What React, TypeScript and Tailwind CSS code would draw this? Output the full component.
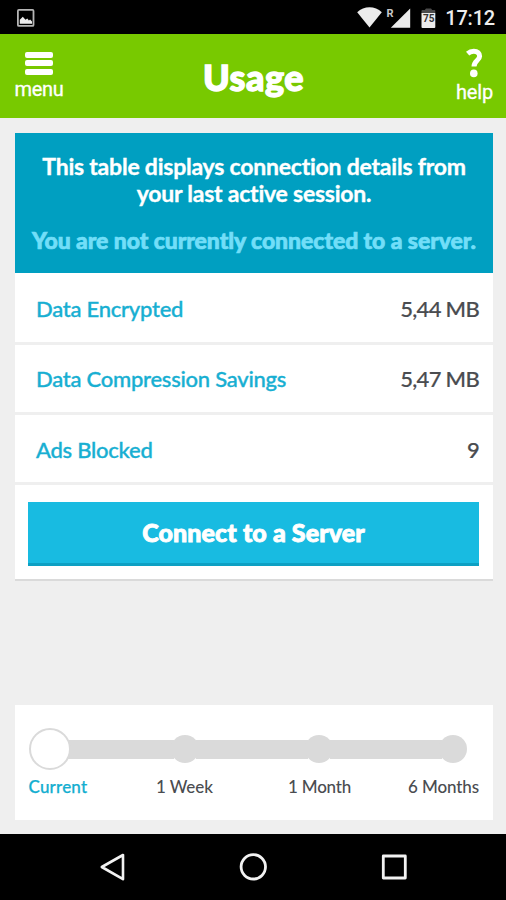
const rows = [
  { label: 'Data Encrypted', value: '5,44 MB', size: 'h-[72px] pt-[2px]' },
  { label: 'Data Compression Savings', value: '5,47 MB', size: 'h-[70px]' },
  { label: 'Ads Blocked', value: '9', size: 'h-[70px] pt-[1px]' },
];

function StatusBar() {
  return (
    <div className="flex h-[34px] items-center justify-between bg-black pl-[17px] pr-[11px]">
      <svg width="18" height="18" viewBox="0 0 18 18" className="mt-px">
        <rect x="0.9" y="0.9" width="15.6" height="16" rx="1" fill="none" stroke="#b5b5b5" strokeWidth="1.8" />
        <path d="M2.8 14.8V10.8l3-3 2.7 3 1.8-1.4 1.6 2 1.2-.8 1.9 1.8v2.4z" fill="#eee" />
      </svg>
      <div className="flex items-center">
        <svg width="80" height="24" viewBox="0 0 80 24" className="mr-[8px]">
          <path d="M0.2 7.2C7 0.6 18 0.6 24.8 7.2L12.5 22.6z" fill="#ececec" />
          <path d="M53.2 3.4V22.8H33.8z" fill="#ececec" />
          <text x="29.6" y="11.6" fontFamily="Roboto" fontSize="11" fontWeight="700" fill="#c8c8c8">R</text>
          <path d="M64.5 8.5V5.7q0-.8 1-.8h2.3L69 3.5h5l1.2 1.4h2.1q1 0 1 .8v2.8z" fill="#4a4a4a" />
          <path d="M64.5 8h13.8v14q0 1-1 1H65.5q-1 0-1-1z" fill="#ececec" />
          <text x="66" y="16.6" fontFamily="Roboto" fontSize="10" fontWeight="700" fill="#333">75</text>
        </svg>
        <span className="mt-[2px] font-['Roboto',sans-serif] text-[20px] leading-6 font-medium tracking-[-0.2px] text-[#ececec]">17:12</span>
      </div>
    </div>
  );
}

function Header() {
  return (
    <header className="flex h-[84px] items-start justify-between bg-[#78c900] pl-[15px] pr-[13px] text-white">
      <button className="flex w-[48px] flex-col items-center">
        <span className="mt-[17.5px] flex flex-col gap-[2.5px]">
          <span className="h-[6px] w-[28px] rounded-[2px] bg-white" />
          <span className="h-[6px] w-[28px] rounded-[2px] bg-white" />
          <span className="h-[6px] w-[28px] rounded-[2px] bg-white" />
        </span>
        <span className="mt-[2px] font-['Roboto',sans-serif] text-[20px] leading-6 tracking-[-0.3px] [-webkit-text-stroke:0.3px_white]">menu</span>
      </button>
      <h1 className="mt-[21px] mr-[12px] text-[36px] leading-[44px] font-black tracking-[0.5px] [-webkit-text-stroke:1.3px_white]">Usage</h1>
      <button className="flex w-[37px] flex-col items-center">
        <svg width="17" height="30" viewBox="0 0 17 30" className="mt-[14px]">
          <path d="M1.6 5.6Q4.2 3.2 7.8 3.2C11.6 3.2 13.6 5.2 13.6 8.2c0 4.2-5.6 4.6-5.6 10.2" fill="none" stroke="white" strokeWidth="5" />
          <circle cx="7.8" cy="25.4" r="3.8" fill="white" />
        </svg>
        <span className="mt-[2px] font-['Roboto',sans-serif] text-[20px] leading-6 tracking-[-0.2px] [-webkit-text-stroke:0.3px_white]">help</span>
      </button>
    </header>
  );
}

function PeriodSlider() {
  return (
    <section className="h-[115px] bg-white pr-[14px] pl-[13px]">
      <div className="flex items-center pt-[23px]">
        <span className="z-10 ml-[0.5px] size-[42px] shrink-0 rounded-full border-2 border-[#dadada] bg-white" />
        <span className="-ml-[4px] h-[19px] w-[107px] bg-[#dadada]" />
        <span className="-ml-[3px] size-[28px] rounded-full bg-[#dadada]" />
        <span className="-ml-[3px] h-[19px] w-[112px] bg-[#dadada]" />
        <span className="-ml-[3px] size-[28px] rounded-full bg-[#dadada]" />
        <span className="-ml-[3px] h-[19px] w-[112.5px] bg-[#dadada]" />
        <span className="-ml-[3px] size-[28px] rounded-full bg-[#dadada]" />
      </div>
      <div className="mt-[7px] flex text-[17px] leading-5 font-medium text-[#4a4c50]">
        <span className="w-[128px] pl-[0.5px] tracking-[0.2px] text-[#14aed0] [-webkit-text-stroke:0.25px_#14aed0]">Current</span>
        <span className="w-[132px] tracking-[-0.1px]">1 Week</span>
        <span className="flex-1 tracking-[-0.2px]">1 Month</span>
        <span className="tracking-[-0.1px]">6 Months</span>
      </div>
    </section>
  );
}

export default function App() {
  return (
    <div className="flex h-[900px] w-[506px] flex-col overflow-hidden bg-[#efefef] font-['Lato',sans-serif] [font-variant-ligatures:none]">
      <StatusBar />
      <Header />
      <main className="flex flex-1 flex-col justify-between pt-[15px] pr-[13px] pb-[14px] pl-[15px]">
        <section className="border-b-2 border-[#dadada] bg-white">
          <div className="h-[140px] bg-[#009fc1] pt-[20px] text-center whitespace-nowrap">
            <p className="text-[23px] leading-[27px] font-bold tracking-[-0.22px] text-white [-webkit-text-stroke:0.35px_white]">
              This table displays connection details from
              <br />
              your last active session.
            </p>
            <p className="mt-[20px] text-[23px] leading-[27px] font-black tracking-[-0.07px] text-[#72def8] [-webkit-text-stroke:0.7px_#72def8]">
              You are not currently connected to a server.
            </p>
          </div>
          {rows.map((row) => (
            <div
              key={row.label}
              className={`flex items-center justify-between border-b-3 border-[#efefef] pr-[14px] pl-[21px] text-[22px] font-medium ${row.size}`}
            >
              <span className="tracking-[-0.25px] text-[#18afd2] [-webkit-text-stroke:0.35px_#18afd2]">{row.label}</span>
              <span className="tracking-[-0.7px] text-[#4a4c50] [-webkit-text-stroke:0.2px_#4a4c50]">{row.value}</span>
            </div>
          ))}
          <div className="h-[94px] pt-[16.5px] pr-[14px] pl-[13px]">
            <button className="block h-[64.5px] w-full border-b-3 border-[#0da0c3] bg-[#18bbe1] text-[25px] font-black tracking-[0.1px] text-white [-webkit-text-stroke:0.9px_white]">
              Connect to a Server
            </button>
          </div>
        </section>
        <PeriodSlider />
      </main>
      <nav className="flex h-[66px] items-center justify-center gap-[114px] bg-black">
        <svg width="26" height="28" viewBox="0 0 26 28" fill="none" stroke="#f2f2f2" strokeWidth="2.6" strokeLinejoin="round">
          <path d="M24 2V26.2L2.8 14z" />
        </svg>
        <svg width="28" height="28" viewBox="0 0 28 28" fill="none" stroke="#f2f2f2" strokeWidth="2.8">
          <circle cx="14.3" cy="13.8" r="12.2" />
        </svg>
        <svg width="26" height="26" viewBox="0 0 26 26" fill="none" stroke="#f2f2f2" strokeWidth="2.8" strokeLinejoin="round">
          <rect x="2.3" y="2" width="22" height="22" />
        </svg>
      </nav>
    </div>
  );
}
